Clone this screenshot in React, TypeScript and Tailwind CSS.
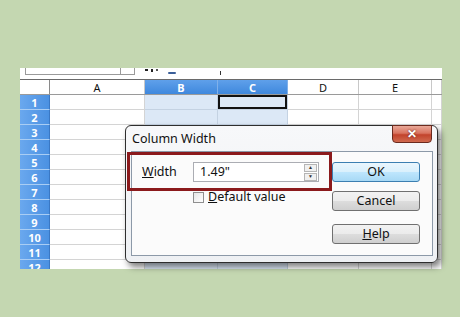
import React from "react";

const cols = [
  { w: 95, label: "A", sel: false },
  { w: 73, label: "B", sel: true },
  { w: 70, label: "C", sel: true },
  { w: 71, label: "D", sel: false },
  { w: 73, label: "E", sel: false },
  { w: 10, label: "", sel: false },
];

const rows = [1, 2, 3, 4, 5, 6, 7, 8, 9, 10, 11, 12];

function Btn({ children, primary }: { children: React.ReactNode; primary?: boolean }) {
  return (
    <div
      className={
        "h-[20px] w-[88px] rounded-[3px] border flex items-center justify-center text-[12.5px] text-[#111] " +
        (primary
          ? "border-[#3c7fb1] bg-[linear-gradient(#eaf6fd_0%,#d9f0fc_50%,#bee6fd_51%,#a7d9f5_100%)]"
          : "border-[#707070] bg-[linear-gradient(#f2f2f2_0%,#ebebeb_50%,#dddddd_51%,#cfcfcf_100%)]")
      }
    >
      {children}
    </div>
  );
}

export default function App() {
  return (
    <div
      className="relative w-[460px] h-[317px] overflow-hidden bg-[#c4d7b1]"
      style={{ fontFamily: '"Noto Sans", "Open Sans", Arial, sans-serif' }}
    >
      <div className="ml-[20px] mt-[68px] w-[422px] h-[201px] overflow-hidden bg-white flex flex-col">
        {/* toolbar strip */}
        <div className="h-[11px] flex items-start shrink-0 relative">
          <div className="ml-[5px] w-[95px] h-[7px] border-l border-b border-[#9a9a9a]" />
          <div className="w-[15px] h-[7px] border-l border-r border-b border-[#9a9a9a]" />
          <div className="ml-[10px] mt-[1px] flex gap-[3px] items-start">
            <div className="w-[3px] h-[2px] bg-[#222]" />
            <div className="w-[2px] h-[3px] bg-[#222]" />
            <div className="w-[2px] h-[2px] bg-[#555]" />
          </div>
          <div className="ml-[10px] mt-[4px] w-[8px] h-[2px] bg-[#3b5f99] rounded-full" />
          <div className="ml-[44px] mt-[3px] w-[1px] h-[4px] bg-[#333]" />
        </div>
        {/* column header row */}
        <div className="flex h-[16px] shrink-0 border-t border-[#6a6a6a] border-b border-b-[#9a9a9a]">
          <div className="w-[30px] shrink-0 border-r border-[#8a8a8a]" />
          {cols.map((c, i) => (
            <div
              key={i}
              style={{ width: c.w }}
              className={
                "shrink-0 flex items-center justify-center text-[11px] leading-none border-r " +
                (c.sel
                  ? "bg-[linear-gradient(#5fa0ea,#3f88dd)] text-white font-bold border-[#7fb0ea]"
                  : "text-[#111] border-[#c8c8c8]")
              }
            >
              {c.label}
            </div>
          ))}
        </div>
        {/* rows */}
        {rows.map((r) => (
          <div key={r} className="flex h-[15px] shrink-0">
            <div className="w-[30px] shrink-0 bg-[linear-gradient(90deg,#6aa8ee,#4b91e2)] border-b border-[#a9cdf4] border-r border-r-[#3a78c4] flex items-center justify-center text-white font-bold text-[11px] leading-none">
              {r}
            </div>
            {cols.map((c, i) => (
              <div
                key={i}
                style={{ width: c.w }}
                className={
                  "shrink-0 border-b border-r " +
                  (c.sel ? "bg-[#dce8f6] border-[#c4d2e2]" : "bg-white border-[#d4d4d4]") +
                  (r === 1 && c.label === "C" ? " shadow-[inset_0_0_0_2px_#111]" : "")
                }
              />
            ))}
          </div>
        ))}
      </div>

      {/* dialog */}
      <div className="absolute left-[125px] top-[125px] w-[313px] h-[138px] rounded-[6px] border border-[#2e2e2e] bg-[linear-gradient(#f7f8fa,#eef0f3)] shadow-[3px_4px_6px_rgba(0,0,0,0.5)]">
        <div className="absolute left-[6px] top-[5px] text-[12.5px] leading-[16px] text-[#111]">Column Width</div>
        {/* close button */}
        <div className="absolute right-[5px] -top-[1px] w-[40px] h-[18px] rounded-b-[4px] border border-[#6b2a1e] bg-[linear-gradient(#e9a898_0%,#d9735f_45%,#c2432c_55%,#d06a4f_100%)] flex items-center justify-center">
          <span className="text-white font-bold text-[12px] leading-none" style={{ textShadow: "0 0 2px #5a1a10" }}>
            ✕
          </span>
        </div>
        {/* client area */}
        <div className="absolute left-[5px] top-[25px] right-[4px] bottom-[6px] border border-[#8c99a8] bg-[#fbfbfb] flex">
          <div className="flex-1 pt-[10px] pl-[10px]">
            <div className="flex items-center h-[20px]">
              <div className="w-[51px] text-[12.5px] text-[#111]">
                <span className="underline">W</span>idth
              </div>
              <div className="w-[126px] h-[20px] border border-[#abadb3] bg-white flex items-center">
                <span className="pl-[6px] text-[12.5px] text-[#111] flex-1">1.49"</span>
                <div className="w-[13px] h-[17px] mr-[1px] flex flex-col gap-[1px]">
                  <div className="flex-1 border border-[#b5b5b5] bg-[#f0f0f0] flex items-center justify-center text-[5px] leading-none text-[#333]">▲</div>
                  <div className="flex-1 border border-[#b5b5b5] bg-[#f0f0f0] flex items-center justify-center text-[5px] leading-none text-[#333]">▼</div>
                </div>
              </div>
            </div>
            <div className="flex items-center mt-[9px] ml-[51px]">
              <div className="w-[11px] h-[11px] border border-[#8f8f8f] bg-[linear-gradient(135deg,#e6e6e6,#ffffff)]" />
              <span className="ml-[4px] text-[12.5px] text-[#111] leading-none">
                <span className="underline">D</span>efault value
              </span>
            </div>
          </div>
          <div className="w-[88px] mr-[12px] pt-[10px] flex flex-col">
            <Btn primary>OK</Btn>
            <div className="mt-[9px]">
              <Btn>Cancel</Btn>
            </div>
            <div className="mt-[13px]">
              <Btn>
                <span>
                  <span className="underline">H</span>elp
                </span>
              </Btn>
            </div>
          </div>
        </div>
        {/* red highlight */}
        <div className="absolute left-[1px] top-[26px] w-[205px] h-[39px] border-[3px] border-[#8b1a1c]" />
      </div>
    </div>
  );
}
